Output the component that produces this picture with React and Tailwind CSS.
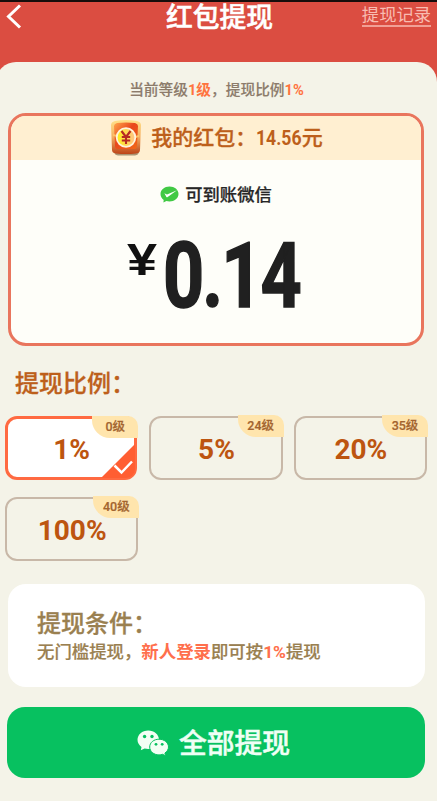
const ratios = [
  { value: "1%", level: "0级", active: true },
  { value: "5%", level: "24级" },
  { value: "20%", level: "35级" },
  { value: "100%", level: "40级" },
];

function WechatIcon() {
  return (
    <svg width="32" height="26" viewBox="0 0 32 26" className="shrink-0">
      <path
        d="M11.200.5C5.200.5.5 4.600.5 9.800c0 3 1.600 5.500 4 7.200L3.800 20.200l3.800-1.700c1.200.3 2.400.5 3.600.5 6 0 10.800-4.100 10.800-9.200S17.200.5 11.200.5Z"
        fill="#f2fff4"
      />
      <circle cx="7.600" cy="6.500" r="1.700" fill="#07c160" />
      <circle cx="15" cy="6.500" r="1.700" fill="#07c160" />
      <path
        d="M22 9.200c-5.200 0-9.300 3.400-9.300 7.800s4.100 7.900 9.300 7.900c1.300 0 2.400-.2 3.500-.6l3.200 1.500-.8-2.800c2.200-1.500 3.600-3.600 3.600-6 0-4.400-4.300-7.800-9.500-7.800Z"
        fill="#f2fff4"
        stroke="#07c160"
        strokeWidth="1"
      />
      <circle cx="19" cy="14.300" r="1.400" fill="#07c160" />
      <circle cx="25.200" cy="14.300" r="1.400" fill="#07c160" />
    </svg>
  );
}

function PayIcon() {
  return (
    <svg width="19" height="17" viewBox="0 0 19 17" className="shrink-0">
      <path
        d="M9.500.5C4.500.5.5 3.700.5 8c0 2.500 1.200 4.500 3.200 5.900L3.400 16.400l3-1.400c1 .3 2 .4 3.100.4 5 0 9-3.200 9-7.500S14.500.5 9.500.5Z"
        fill="#41c944"
      />
      <path
        d="M4.400 7.200 7 8.400 17 4.200 7.700 11.100c-.5.4-1 .3-1.300-.2Z"
        fill="#fff"
      />
    </svg>
  );
}

function RedPacketIcon() {
  return (
    <svg width="34" height="38" viewBox="0 0 34 38" className="shrink-0">
      <defs>
        <linearGradient id="frame" x1="0" y1="0" x2="0" y2="1">
          <stop offset="0" stopColor="#ffe28a" />
          <stop offset=".5" stopColor="#f4ad61" />
          <stop offset="1" stopColor="#bd4418" />
        </linearGradient>
        <linearGradient id="packet" x1="0" y1="0" x2="1" y2="1">
          <stop offset="0" stopColor="#ffa64c" />
          <stop offset=".45" stopColor="#e9481c" />
          <stop offset="1" stopColor="#f26a18" />
        </linearGradient>
        <linearGradient id="coin" x1="0" y1="0" x2="1" y2="0">
          <stop offset="0" stopColor="#fff21a" />
          <stop offset="1" stopColor="#ffc18a" />
        </linearGradient>
      </defs>
      <path d="M4 5Q17 0 31 5l-1 27q0 4-4 4.500H9Q5 36 5 32Z" fill="#7d6240" opacity=".65" />
      <path d="M2 6q0-3 4-4 11-2 22 0 4 1 4 4l-1 25q0 3-4 3.500-10 1-20 0-4-.5-4-3.500Z" fill="url(#frame)" />
      <path d="M5 7q0-2 3-3 9-1 18 0 3 1 3 3l-1 20q0 3-3 3H9q-3 0-3-3Z" fill="url(#packet)" />
      <path d="M4 16c4 0 5 3 7 4M30 17c-4 0-5 3-7 4" fill="none" stroke="#ffc468" strokeWidth="2" />
      <circle cx="17" cy="18.500" r="9.300" fill="url(#coin)" stroke="#fff3dc" strokeWidth="1.800" />
      <path d="m12.500 12 4.500 6 4.500-6M17 18v7M12.800 18h8.400M12.800 21.500h8.400" fill="none" stroke="#b62a22" strokeWidth="2.100" />
    </svg>
  );
}

function RatioTile({ value, level, active }) {
  return (
    <div
      className={
        active
          ? "relative mr-px flex h-16 items-center justify-center rounded-xl border-[3px] border-[#ff6a41] bg-white"
          : "relative flex h-16 items-center justify-center rounded-xl border-2 border-[#c8b8a8]"
      }
    >
      <span className="pt-[3px] pl-px text-[28px] leading-none font-bold text-[#bd5510]">{value}</span>
      {active && (
        <svg
          width="34"
          height="34"
          viewBox="0 0 34 34"
          className="absolute -right-px -bottom-px rounded-br-[9px]"
        >
          <path d="M34 0v34H0Z" fill="#ff5e32" />
          <path d="m13.500 21.500 7 7 10.500-11" fill="none" stroke="#fff" strokeWidth="2.500" />
        </svg>
      )}
      <span
        className={
          active
            ? "absolute -top-[3px] -right-1 flex h-[22px] w-[46px] items-center justify-center rounded-tr-[10px] rounded-bl-[18px] bg-[#ffe5ad] text-[12.500px] font-medium text-[#a3642f] [-webkit-text-stroke:0.2px]"
            : "absolute -top-[3px] -right-[3px] flex h-[22px] w-[46px] items-center justify-center rounded-tr-[10px] rounded-bl-[18px] bg-[#ffe5ad] text-[12.500px] font-medium text-[#a3642f] [-webkit-text-stroke:0.2px]"
        }
      >
        {level}
      </span>
    </div>
  );
}

export default function App() {
  return (
    <main className="h-[801px] w-[437px] overflow-hidden border-t-2 border-[#160d0b] bg-[#db4d41] font-[Roboto,'Noto_Sans_CJK_SC',sans-serif]">
      {/* header */}
      <header className="grid h-[60px] grid-cols-[1fr_auto_1fr] items-start px-1.5">
        <svg width="16" height="26" viewBox="0 0 16 26" className="mt-px">
          <path d="M14 2.500 2.500 13.500 14 24.500" fill="none" stroke="#fff" strokeWidth="3" />
        </svg>
        <h1 className="pt-px pl-0.5 text-[26.800px] leading-[31px] font-medium text-white [-webkit-text-stroke:0.5px]">
          红包提现
        </h1>
        <a className="mt-1 justify-self-end border-b-2 border-[#f1a096] text-[17.300px] leading-[19px] text-[#f8bcb2]">
          提现记录
        </a>
      </header>

      <div className="-ml-1 h-[739px] rounded-t-[20px] bg-[#f4f3e8] pt-[17px] pr-3 pl-[9px]">
        <p className="pl-[3px] text-center text-[14.700px] leading-[22px] font-medium text-[#8c7b6b] [-webkit-text-stroke:0.15px]">
          当前等级<span className="font-bold text-[#ff733f] [-webkit-text-stroke:0]">1级</span>，提现比例
          <span className="font-bold text-[#ff733f] [-webkit-text-stroke:0]">1%</span>
        </p>

        {/* balance */}
        <section className="mt-3 ml-[3px] h-[233px] w-[416px] overflow-hidden rounded-[18px] border-[3px] border-[#e9755d] bg-[#fefef9]">
          <div className="flex h-[44px] items-center justify-center bg-[#ffefd1] text-[21px] font-medium text-[#bd5f1b]">
            <RedPacketIcon />
            <span className="mt-0.5 ml-2 [-webkit-text-stroke:0.3px]">我的红包：</span>
            <span className="mt-0.5 -mr-[9px] origin-left scale-x-[0.840] font-bold">14.56</span>
            <span className="mt-0.5 [-webkit-text-stroke:0.3px]">元</span>
          </div>
          <div className="mt-[24px] flex h-5 items-center justify-center gap-1.5 text-[17.300px] font-medium text-[#262626]">
            <PayIcon />
            <span className="mt-[3px] [-webkit-text-stroke:0.25px]">可到账微信</span>
          </div>
          <div className="mt-[34px] flex h-20 items-start pl-[116px] font-bold">
            <span className="mt-[3px] w-[36px] origin-left scale-x-[1.200] font-['Liberation_Sans'] text-[45px] leading-[38px] text-[#111]">
              ¥
            </span>
            <span className="origin-left scale-x-[0.790] text-[91px] leading-[76px] tracking-[-2.500px] text-[#202020] [-webkit-text-stroke:1.500px]">
              0.14
            </span>
          </div>
        </section>

        <h2 className="mt-[21px] ml-[10px] text-[24px] leading-[34px] font-medium text-[#bd5f1b] [-webkit-text-stroke:0.3px]">
          提现比例：
        </h2>

        <div className="mt-[15px] grid w-[422px] grid-cols-3 gap-x-[11px] gap-y-[17px]">
          {ratios.map((ratio) => (
            <RatioTile key={ratio.value} {...ratio} />
          ))}
        </div>

        {/* conditions */}
        <section className="mt-[23px] ml-[3px] h-[103px] w-[417px] rounded-[18px] bg-white pt-[24px] pl-[29px] font-medium text-[#9a8050]">
          <h2 className="text-[24px] leading-8 [-webkit-text-stroke:0.3px]">提现条件：</h2>
          <p className="text-[17.400px] leading-6 [-webkit-text-stroke:0.2px]">
            无门槛提现，<span className="font-bold text-[#ff6f4c] [-webkit-text-stroke:0]">新人登录</span>即可按
            <span className="font-bold text-[#ff6f4c] [-webkit-text-stroke:0]">1%</span>提现
          </p>
        </section>

        <button className="mt-5 ml-0.5 flex h-[71px] w-[418px] items-center justify-center gap-2.5 rounded-[18px] bg-[#07c160] pr-[5px] text-[27.800px] font-medium text-[#effff5]">
          <WechatIcon />
          <span className="mt-0.5 [-webkit-text-stroke:0.5px]">全部提现</span>
        </button>
      </div>
    </main>
  );
}
